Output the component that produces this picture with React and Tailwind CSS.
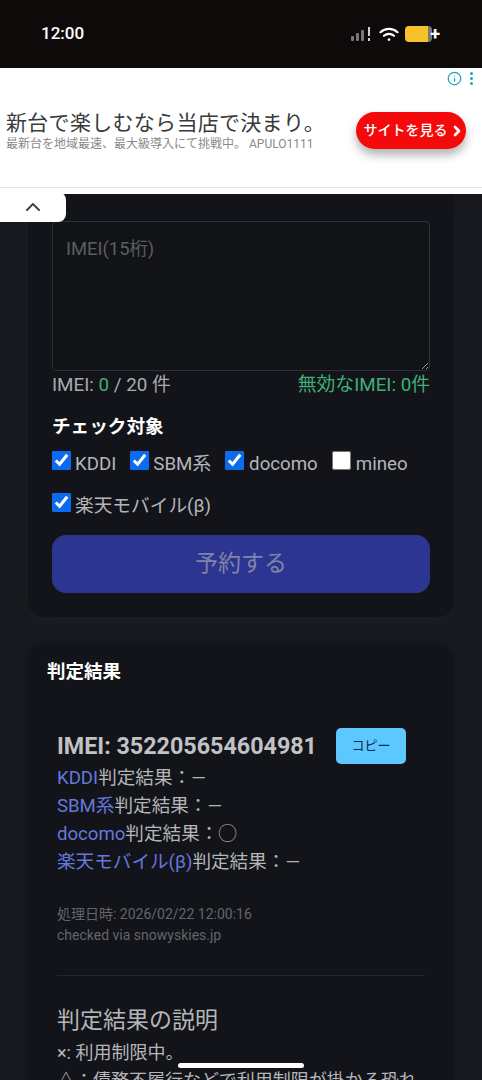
import React from 'react'
import { ChevronUp, ChevronRight, Info } from 'lucide-react'

const carriers = [
  { label: 'KDDI', checked: true, cls: 'mr-[14px]', gap: 'mr-[4px]' },
  { label: 'SBM系', checked: true, cls: 'mr-[14px]', gap: 'mr-[4px]' },
  { label: 'docomo', checked: true, cls: 'mr-[14px]', gap: 'mr-[5px]' },
  { label: 'mineo', checked: false, cls: '', gap: 'mr-[5px]' },
  { label: '楽天モバイル(β)', checked: true, cls: '', gap: 'mr-[4px]' },
]

const results = [
  { name: 'KDDI', value: '―' },
  { name: 'SBM系', value: '―' },
  { name: 'docomo', value: '◯' },
  { name: '楽天モバイル(β)', value: '―' },
]

function StatusBar() {
  return (
    <div className="flex h-[68px] items-center justify-between bg-[#0f0a0a] pl-[41px] pr-[42px]">
      <span className="text-[17px] font-medium text-white">12:00</span>
      <div className="flex items-center">
        <svg width="21" height="16" viewBox="0 0 21 16" fill="none">
          <rect x="0" y="10" width="3" height="5" rx="1" fill="#77777a" />
          <rect x="5" y="7" width="3" height="8" rx="1" fill="#77777a" />
          <rect x="10" y="4" width="3" height="11" rx="1" fill="#77777a" />
          <rect x="17" y="1" width="2" height="9" fill="#d0d0d0" />
          <rect x="17" y="12" width="2" height="3" fill="#d0d0d0" />
        </svg>
        <svg className="ml-[7px]" width="20" height="15" viewBox="0 0 20 15" fill="none" stroke="white" strokeWidth="2.2" strokeLinecap="round">
          <path d="M1.5 5.2a12.5 12.5 0 0 1 17 0" />
          <path d="M5 8.8a7.5 7.5 0 0 1 10 0" />
          <circle cx="10" cy="12.6" r="1.3" fill="white" stroke="none" />
        </svg>
        <div className="ml-[6px] flex items-center">
          <div className="flex h-[16px] w-[27px] overflow-hidden rounded-[4px]">
            <div className="h-full w-[23px] bg-[#f7c12c]" />
            <div className="h-full w-[4px] bg-[#77777a]" />
          </div>
          <span className="ml-[-2px] text-[18px] font-bold leading-none text-white">+</span>
        </div>
      </div>
    </div>
  )
}

function AdBanner() {
  return (
    <div className="relative flex h-[120px] items-center justify-between border-b border-[#e4e4e4] bg-white pl-[6px] pr-[16px] pt-[6px]">
      <div className="absolute right-[9px] top-[3px] flex items-center gap-[8px]">
        <Info className="h-[15px] w-[15px] text-[#1fa3c0]" strokeWidth={2} />
        <div className="flex flex-col gap-[2px]">
          <span className="h-[3px] w-[3px] rounded-full bg-[#1fa3c0]" />
          <span className="h-[3px] w-[3px] rounded-full bg-[#1fa3c0]" />
          <span className="h-[3px] w-[3px] rounded-full bg-[#1fa3c0]" />
        </div>
      </div>
      <div>
        <div className="text-[21px] leading-[26px] tracking-[0.3px] text-[#3a3a3a]">新台で楽しむなら当店で決まり。</div>
        <div className="text-[12px] leading-[16px] text-[#8a8a8a]">最新台を地域最速、最大級導入にて挑戦中。 APULO1111</div>
      </div>
      <div className="flex h-[37px] w-[110px] items-center justify-center rounded-full bg-[#f40a0a] text-[14px] font-medium text-white shadow-[0_6px_10px_rgba(0,0,0,0.3)]">
        サイトを見る
        <ChevronRight className="ml-[1px] mr-[-6px] h-[16px] w-[16px]" strokeWidth={4} />
      </div>
    </div>
  )
}

export default function App() {
  return (
    <div
      className="relative h-[1080px] w-[482px] overflow-hidden bg-[#17181d]"
      style={{ fontFamily: 'Roboto, "Noto Sans CJK JP", sans-serif' }}
    >
      <StatusBar />
      <AdBanner />
      <div className="h-[6px] bg-white" />

      {/* 開閉タブ */}
      <div className="absolute left-0 top-[192px] z-10 flex h-[30px] w-[66px] items-center justify-center rounded-br-[8px] rounded-tr-[8px] bg-white">
        <ChevronUp className="h-[24px] w-[24px] text-[#444]" strokeWidth={2} />
      </div>

      <main className="px-[28px]">
        <section className="rounded-b-[16px] bg-[#131419] px-[24px] pb-[24px] pt-[27px] shadow-[0_8px_20px_rgba(255,255,255,0.03)]">
          <textarea
            placeholder="IMEI(15桁)"
            className="block h-[150px] w-full rounded-[4px] border border-[#2d2f3b] bg-[#121317] px-[13px] py-[14px] text-[18.4px] leading-[26px] text-[#b4b6ba] placeholder:text-[#5b5d63]"
          />
          <div className="mt-[3px] flex justify-between text-[18.8px] leading-[22px]">
            <span className="text-[#a9abaf]">
              IMEI: <span className="text-[#3fae78]">0</span> / 20 件
            </span>
            <span className="text-[#3fae78]">無効なIMEI: 0件</span>
          </div>

          <div className="mt-[19px] text-[18.6px] font-bold leading-[24px] text-white">チェック対象</div>
          <div className="mt-[12px] flex flex-wrap">
            {carriers.map((c) => (
              <label key={c.label} className={`mb-[16px] flex h-[26px] items-start text-[18.7px] leading-[26px] text-[#b4b6ba] ${c.cls}`}>
                <input
                  type="checkbox"
                  defaultChecked={c.checked}
                  className={`m-0 mt-0 h-[19px] w-[19px] accent-[#0b6bf0] ${c.gap}`}
                />
                <span>{c.label}</span>
              </label>
            ))}
          </div>
          <button className="flex h-[58px] w-full items-center justify-center rounded-[14px] bg-[#2c3690] text-[23px] text-[#7f84a8]">
            予約する
          </button>
        </section>

        <section className="mt-[27px] rounded-t-[16px] bg-[#131419] pt-[15px]">
          <h2 className="pl-[19px] text-[18.5px] font-bold leading-[26px] text-white">判定結果</h2>
          <div className="px-[29px] pt-[43px]">
            <div className="flex items-center">
              <span className="text-[23.3px] font-bold leading-[36px] text-[#c0c2c5]">IMEI: 352205654604981</span>
              <button className="ml-[19px] h-[36px] w-[70px] rounded-[5px] bg-[#5cc8ff] text-[13px] text-[#0b2f4a]">コピー</button>
            </div>
            <div>
              {results.map((r) => (
                <div key={r.name} className="text-[18.6px] leading-[28px] text-[#b4b6ba]">
                  <span className="text-[#6478dc]">{r.name}</span>判定結果：{r.value}
                </div>
              ))}
            </div>
            <div className="mt-[28px] text-[14px] leading-[21px] text-[#62656c]">
              <div>処理日時: 2026/02/22 12:00:16</div>
              <div>checked via snowyskies.jp</div>
            </div>
            <hr className="mt-[29px] border-[#24262c]" />
            <h3 className="mt-[27px] text-[23px] leading-[36px] text-[#b4b6ba]">判定結果の説明</h3>
            <div className="text-[18px] leading-[28px] text-[#b4b6ba]">
              <div>×: 利用制限中。</div>
              <div className="whitespace-nowrap">△：債務不履行などで利用制限が掛かる恐れ</div>
            </div>
          </div>
        </section>
      </main>

      {/* ホームインジケータ */}
      <div className="absolute left-[178px] top-[1063px] h-[5px] w-[126px] rounded-full bg-white" />
    </div>
  )
}
